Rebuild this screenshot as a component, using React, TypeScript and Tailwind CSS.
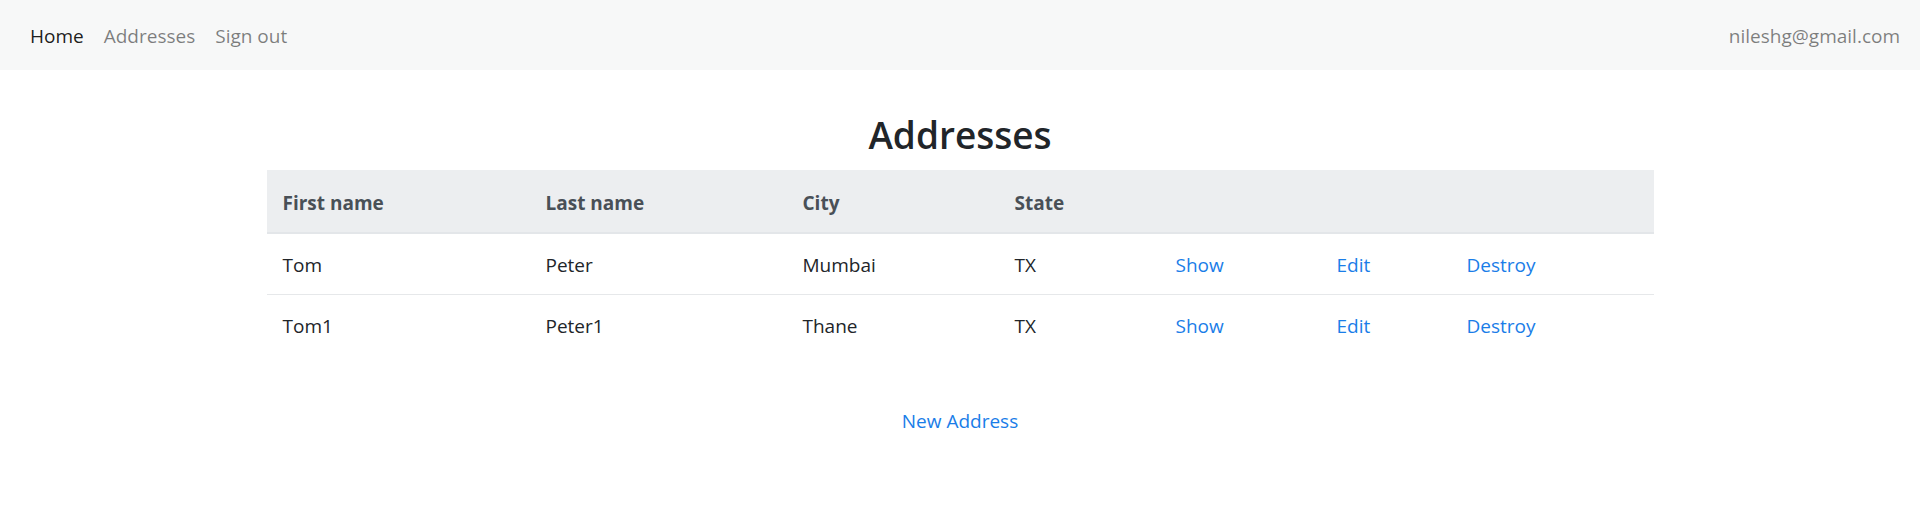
import React from "react"

interface Address {
  firstName: string
  lastName: string
  city: string
  state: string
}

const addresses: Address[] = [
  { firstName: "Tom", lastName: "Peter", city: "Mumbai", state: "TX" },
  { firstName: "Tom1", lastName: "Peter1", city: "Thane", state: "TX" },
]

function Navbar() {
  return (
    <nav className="flex h-[70px] items-center justify-between bg-[#f7f8f8] pt-[2px] px-5">
      <ul className="flex items-center">
        <li>
          <a href="#" className="block px-[10px] py-[10px] leading-[30px] text-black/90">
            Home
          </a>
        </li>
        <li>
          <a href="#" className="block px-[10px] py-[10px] leading-[30px] text-black/50">
            Addresses
          </a>
        </li>
        <li>
          <a href="#" className="block px-[10px] py-[10px] leading-[30px] text-black/50">
            Sign out
          </a>
        </li>
      </ul>
      <span className="leading-[30px] text-black/50">nileshg@gmail.com</span>
    </nav>
  )
}

export default function App() {
  const th = "px-4 pt-[18px] pb-[14px] text-left font-bold text-[#495057] bg-[#eceef0] border-b-2 border-[#e3e6e9]"
  const td = "px-4 pt-[16px] pb-[14px] border-t border-[#e6e8ea]"
  const link = "text-[#1a7de8] hover:underline"

  return (
    <div className="min-h-[514px] bg-white font-['Open_Sans',sans-serif] text-[19px] leading-[30px] text-[#212529]">
      <Navbar />

      <div className="mx-auto w-[1387px] pt-[40px]">
        <h2 className="mb-[10px] text-center text-[37px] font-semibold leading-[50px]">Addresses</h2>

        <table className="w-full table-fixed border-collapse">
          <thead>
            <tr>
              <th className={`${th} w-[263px]`}>First name</th>
              <th className={`${th} w-[257px]`}>Last name</th>
              <th className={`${th} w-[212px]`}>City</th>
              <th className={`${th} w-[161px]`}>State</th>
              <th className={`${th} w-[161px]`}></th>
              <th className={`${th} w-[130px]`}></th>
              <th className={th}></th>
            </tr>
          </thead>
          <tbody>
            {addresses.map((a) => (
              <tr key={a.firstName}>
                <td className={td}>{a.firstName}</td>
                <td className={td}>{a.lastName}</td>
                <td className={td}>{a.city}</td>
                <td className={td}>{a.state}</td>
                <td className={td}>
                  <a href="#" className={link}>Show</a>
                </td>
                <td className={td}>
                  <a href="#" className={link}>Edit</a>
                </td>
                <td className={td}>
                  <a href="#" className={link}>Destroy</a>
                </td>
              </tr>
            ))}
          </tbody>
        </table>

        <div className="mt-[51px] text-center">
          <a href="#" className={link}>New Address</a>
        </div>
      </div>
    </div>
  )
}
